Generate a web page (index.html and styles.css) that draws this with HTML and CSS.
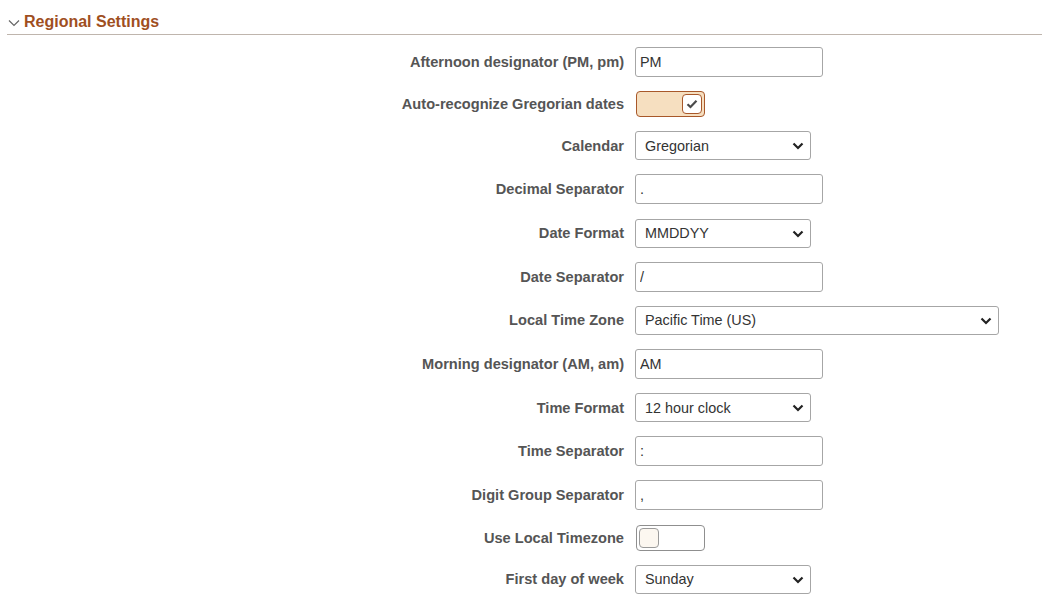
FILE: index.html
```html
<!DOCTYPE html>
<html lang="en">
<head>
<meta charset="utf-8">
<title>Regional Settings</title>
<link rel="stylesheet" href="styles.css">
</head>
<body>
<section class="group">
  <h2 class="group-header">
    <svg class="collapse-icon" width="12" height="8" viewBox="0 0 12 8" aria-hidden="true"><path d="M1 1.5 L6 6.5 L11 1.5" fill="none" stroke="#666" stroke-width="1.2"/></svg>
    <span>Regional Settings</span>
  </h2>
  <div class="form">
    <label class="lbl">Afternoon designator (PM, pm)</label>
    <div class="ctl"><input class="txt" type="text" value="PM"></div>

    <label class="lbl">Auto-recognize Gregorian dates</label>
    <div class="ctl"><span class="toggle on"><span class="knob"><svg width="12" height="10" viewBox="0 0 12 10"><path d="M1.5 5.2 L4.5 8 L10.5 1.8" fill="none" stroke="#4a4a4a" stroke-width="2.2"/></svg></span></span></div>

    <label class="lbl">Calendar</label>
    <div class="ctl"><span class="sel-wrap"><select class="sel"><option>Gregorian</option></select><svg class="chev" width="12" height="8" viewBox="0 0 12 8"><path d="M1.5 1.5 L6 6 L10.5 1.5" fill="none" stroke="#222" stroke-width="2.2"/></svg></span></div>

    <label class="lbl">Decimal Separator</label>
    <div class="ctl"><input class="txt" type="text" value="."></div>

    <label class="lbl">Date Format</label>
    <div class="ctl"><span class="sel-wrap"><select class="sel"><option>MMDDYY</option></select><svg class="chev" width="12" height="8" viewBox="0 0 12 8"><path d="M1.5 1.5 L6 6 L10.5 1.5" fill="none" stroke="#222" stroke-width="2.2"/></svg></span></div>

    <label class="lbl">Date Separator</label>
    <div class="ctl"><input class="txt" type="text" value="/"></div>

    <label class="lbl">Local Time Zone</label>
    <div class="ctl"><span class="sel-wrap wide"><select class="sel"><option>Pacific Time (US)</option></select><svg class="chev" width="12" height="8" viewBox="0 0 12 8"><path d="M1.5 1.5 L6 6 L10.5 1.5" fill="none" stroke="#222" stroke-width="2.2"/></svg></span></div>

    <label class="lbl">Morning designator (AM, am)</label>
    <div class="ctl"><input class="txt" type="text" value="AM"></div>

    <label class="lbl">Time Format</label>
    <div class="ctl"><span class="sel-wrap"><select class="sel"><option>12 hour clock</option></select><svg class="chev" width="12" height="8" viewBox="0 0 12 8"><path d="M1.5 1.5 L6 6 L10.5 1.5" fill="none" stroke="#222" stroke-width="2.2"/></svg></span></div>

    <label class="lbl">Time Separator</label>
    <div class="ctl"><input class="txt" type="text" value=":"></div>

    <label class="lbl">Digit Group Separator</label>
    <div class="ctl"><input class="txt" type="text" value=","></div>

    <label class="lbl">Use Local Timezone</label>
    <div class="ctl"><span class="toggle off"><span class="knob"></span></span></div>

    <label class="lbl">First day of week</label>
    <div class="ctl"><span class="sel-wrap"><select class="sel"><option>Sunday</option></select><svg class="chev" width="12" height="8" viewBox="0 0 12 8"><path d="M1.5 1.5 L6 6 L10.5 1.5" fill="none" stroke="#222" stroke-width="2.2"/></svg></span></div>
  </div>
</section>
</body>
</html>
```
FILE: styles.css
```css
* { box-sizing: border-box; }
html, body { margin: 0; padding: 0; background: #fff; }
body {
  font-family: "Liberation Sans", Arial, sans-serif;
  color: #333;
}
.group { padding-left: 7px; }
.group-header {
  margin: 0;
  height: 35px;
  display: flex;
  align-items: flex-end;
  gap: 4px;
  padding: 0 0 2px 1px;
  border-bottom: 1px solid #bfb5ad;
  font-size: 16px;
  line-height: 20px;
  font-weight: bold;
  color: #9f4f1f;
}
.collapse-icon { margin-bottom: 5px; }
.form {
  display: grid;
  grid-template-columns: 617px auto;
  column-gap: 11px;
  row-gap: 14.15px;
  padding-top: 12px;
  align-items: center;
}
.lbl {
  text-align: right;
  font-size: 14.6px;
  font-weight: bold;
  color: #555;
  line-height: 16px;
}
.ctl { display: flex; align-items: center; }
.txt {
  width: 188px;
  height: 30px;
  border: 1px solid #a6a6a6;
  border-radius: 3px;
  padding: 0 4px;
  font-family: "Liberation Sans", Arial, sans-serif;
  font-size: 14.4px;
  color: #333;
  background: #fff;
}
.sel-wrap {
  position: relative;
  display: inline-block;
  width: 176px;
  height: 29px;
}
.sel-wrap.wide { width: 364px; }
.sel {
  appearance: none;
  -webkit-appearance: none;
  width: 100%;
  height: 100%;
  border: 1px solid #a6a6a6;
  border-radius: 3px;
  padding: 0 28px 0 9px;
  font-family: "Liberation Sans", Arial, sans-serif;
  font-size: 14.4px;
  color: #333;
  background: #fff;
}
.chev {
  position: absolute;
  right: 7px;
  top: 11px;
  pointer-events: none;
}
.toggle {
  display: flex;
  align-items: center;
  width: 69px;
  height: 26px;
  margin-left: 1px;
  border-radius: 4px;
  padding: 2px;
}
.toggle.on {
  background: #f6dfc0;
  border: 1px solid #a8582a;
  justify-content: flex-end;
}
.toggle.off {
  background: #fff;
  border: 1px solid #8f8f8f;
  justify-content: flex-start;
}
.knob {
  width: 20px;
  height: 20px;
  border-radius: 4px;
  display: flex;
  align-items: center;
  justify-content: center;
}
.toggle.on .knob {
  background: #fff;
  border: 1px solid #a8582a;
}
.toggle.off .knob {
  background: #fcf7f0;
  border: 1px solid #9a9a9a;
}
```
